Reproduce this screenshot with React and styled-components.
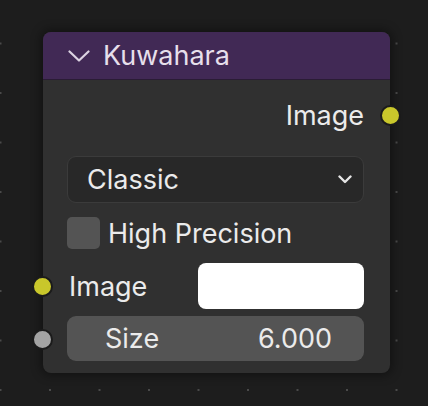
import React from "react";
import styled, { createGlobalStyle } from "styled-components";

const Global = createGlobalStyle`
  html, body { margin: 0; padding: 0; }
  body {
    width: 428px;
    height: 406px;
    overflow: hidden;
    background-color: #1d1d1d;
    background-image: radial-gradient(circle, #4a4a4a 0.9px, transparent 1.4px);
    background-size: 49.5px 49.5px;
    background-position: -24.25px 18.75px;
    font-family: Inter, "Noto Sans", sans-serif;
  }
`;

const Canvas = styled.div`
  padding: 32px 38px 33px 43px;
`;

const Node = styled.div`
  position: relative;
  width: 347px;
  height: 341px;
  box-sizing: border-box;
  border-radius: 8px;
  background: #303030;
  box-shadow: 0 0 10px 3px rgba(0, 0, 0, 0.35);
  display: flex;
  flex-direction: column;
`;

const Header = styled.div`
  height: 47px;
  background: #412955;
  border-radius: 8px 8px 0 0;
  border-bottom: 1px solid #2a1c35;
  display: flex;
  align-items: center;
  padding-left: 25px;
  gap: 13px;
  color: #e6dfeb;
  font-size: 27px;
`;

const Body = styled.div`
  display: flex;
  flex-direction: column;
  padding: 16px 26px 0 24px;
`;

const Row = styled.div`
  position: relative;
  display: flex;
  align-items: center;
  justify-content: ${(p) => (p.$end ? "flex-end" : "flex-start")};
  height: ${(p) => p.$h}px;
  margin-top: ${(p) => p.$mt || 0}px;
  color: #ebebeb;
  font-size: 27px;
`;

const Socket = styled.span`
  position: absolute;
  top: 50%;
  ${(p) => (p.$right ? "right: -37px;" : "left: -35px;")}
  width: 17px;
  height: 17px;
  margin-top: -10px;
  border-radius: 50%;
  background: ${(p) => p.$color};
  border: 2px solid #1b1b1b;
`;

const Dropdown = styled.div`
  flex: 1;
  height: 100%;
  box-sizing: border-box;
  background: #282828;
  border: 1px solid #3b3b3b;
  border-radius: 9px;
  display: flex;
  align-items: center;
  justify-content: space-between;
  padding: 0 11px 0 19px;
`;

const Check = styled.span`
  width: 33px;
  height: 32px;
  border-radius: 5px;
  background: #545454;
  margin-right: 8px;
`;

const Label = styled.span`
  flex: 1;
  padding-left: ${(p) => p.$indent || 0}px;
`;

const ColorField = styled.div`
  width: 166px;
  height: 46px;
  border-radius: 8px;
  background: #ffffff;
`;

const Slider = styled.div`
  flex: 1;
  height: 100%;
  background: #545454;
  border-radius: 9px;
  display: flex;
  align-items: center;
  justify-content: space-between;
  padding: 0 32px 0 38px;
`;

export default function App() {
  return (
    <>
      <Global />
      <Canvas>
        <Node>
          <Header>
            <svg width="22" height="12" viewBox="0 0 22 12">
              <path d="M1.5 1.5 L11 10.5 L20.5 1.5" fill="none" stroke="#dcd3e2" strokeWidth="2.2" strokeLinecap="round" strokeLinejoin="round" />
            </svg>
            <span>Kuwahara</span>
          </Header>
          <Body>
            <Row $end $h={38}>
              <span>Image</span>
              <Socket $right $color="#c9c72b" />
            </Row>
            <Row $h={47} $mt={22}>
              <Dropdown>
                <span>Classic</span>
                <svg width="14" height="9" viewBox="0 0 14 9">
                  <path d="M1.5 1.5 L7 7 L12.5 1.5" fill="none" stroke="#e6e6e6" strokeWidth="2.4" strokeLinecap="round" strokeLinejoin="round" />
                </svg>
              </Dropdown>
            </Row>
            <Row $h={32} $mt={14}>
              <Check />
              <Label>High Precision</Label>
            </Row>
            <Row $h={46} $mt={14}>
              <Label $indent={2}>Image</Label>
              <ColorField />
              <Socket $color="#c9c72b" />
            </Row>
            <Row $h={45} $mt={7}>
              <Slider>
                <span>Size</span>
                <span>6.000</span>
              </Slider>
              <Socket $color="#a3a3a3" />
            </Row>
          </Body>
        </Node>
      </Canvas>
    </>
  );
}
